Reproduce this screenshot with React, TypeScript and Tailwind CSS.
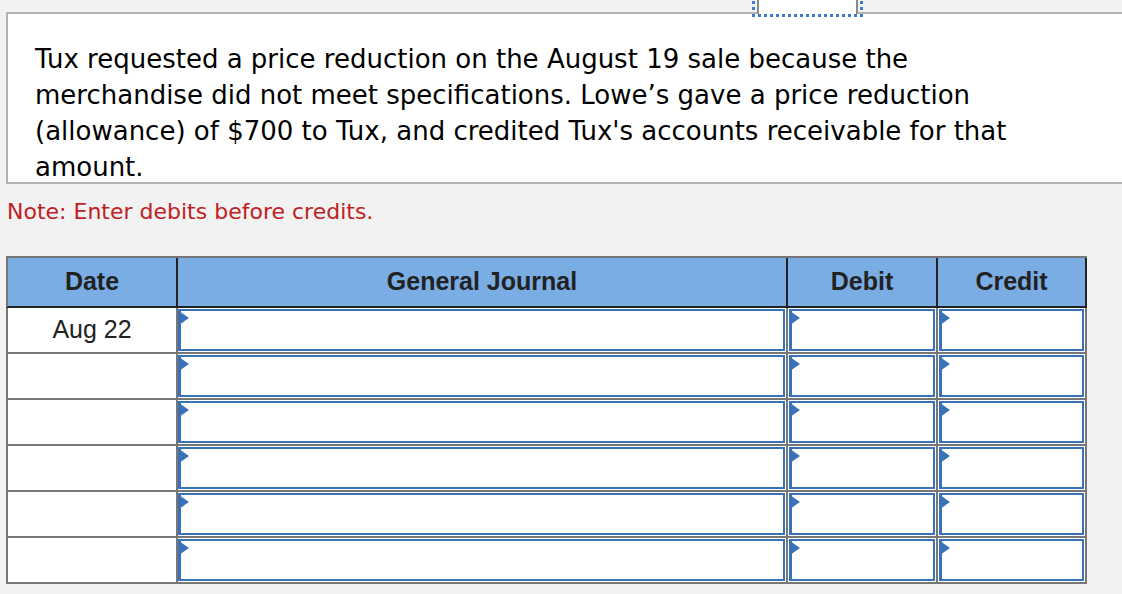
import React from 'react';

function EntryInput() {
  return (
    <div className="relative h-full w-full border-2 border-l-[3px] border-solid border-[#3a72b8] bg-white">
      <span className="absolute left-[-2px] top-0 h-0 w-0 border-y-[7px] border-l-[10px] border-y-transparent border-l-[#3a72b8]" />
    </div>
  );
}

export default function App() {
  const rows = ['Aug 22', '', '', '', '', ''];

  return (
    <div className="relative h-[594px] w-[1122px] overflow-hidden bg-[#f2f2f2]" style={{ fontFamily: '"DejaVu Sans", Verdana, sans-serif' }}>
      {/* tab stub above the question box, with its focus ring */}
      <div className="absolute left-[757px] top-[-4px] h-[18px] w-[101px] border-x-2 border-[#8a8a8a] bg-white" />
      <div className="absolute left-[752px] top-[-12px] h-[29px] w-[111px] border-[3px] border-dotted border-[#3f7acb]" />

      <div className="pt-[12px]">
        <div className="ml-[6px] h-[172px] w-[1130px] border-2 border-[#b3b3b3] bg-white pl-[27px] pt-[27px] text-[26px] leading-[36px] text-black">
          <p className="w-[1000px]">
            Tux requested a price reduction on the August 19 sale because the merchandise did not meet specifications. Lowe’s gave a price reduction (allowance) of $700 to Tux, and credited Tux's accounts receivable for that amount.
          </p>
        </div>

        <p className="mt-[15px] ml-[7px] text-[22px] leading-[26px] text-[#c0201e]">Note: Enter debits before credits.</p>

        <div className="ml-[6px] mt-[31px] w-[1081px]" style={{ fontFamily: '"Liberation Sans", Arial, sans-serif' }}>
          <div className="flex h-[52px] border-t-2 border-l-2 border-b-2 border-t-[#777] border-l-[#777] border-b-[#222] bg-[#79ade4] text-[25px] font-bold text-[#222]">
            <div className="flex w-[170px] items-center justify-center border-r-2 border-[#222]">Date</div>
            <div className="flex w-[610px] items-center justify-center border-r-2 border-[#222]">General Journal</div>
            <div className="flex w-[150px] items-center justify-center border-r-2 border-[#222]">Debit</div>
            <div className="flex w-[149px] items-center justify-center border-r-2 border-[#222]">Credit</div>
          </div>
          {rows.map((date, i) => (
            <div key={i} className="flex h-[46px] border-l-2 border-b-2 border-[#777] bg-white text-[25px] text-[#222]">
              <div className="flex w-[170px] items-center justify-center border-r-2 border-[#777]">{date}</div>
              <div className="w-[610px] border-r-2 border-[#777] py-[1px] pr-[1px]">
                <EntryInput />
              </div>
              <div className="w-[150px] border-r-2 border-[#777] p-[1px]">
                <EntryInput />
              </div>
              <div className="w-[149px] border-r-2 border-[#777] p-[1px]">
                <EntryInput />
              </div>
            </div>
          ))}
        </div>
      </div>
    </div>
  );
}
